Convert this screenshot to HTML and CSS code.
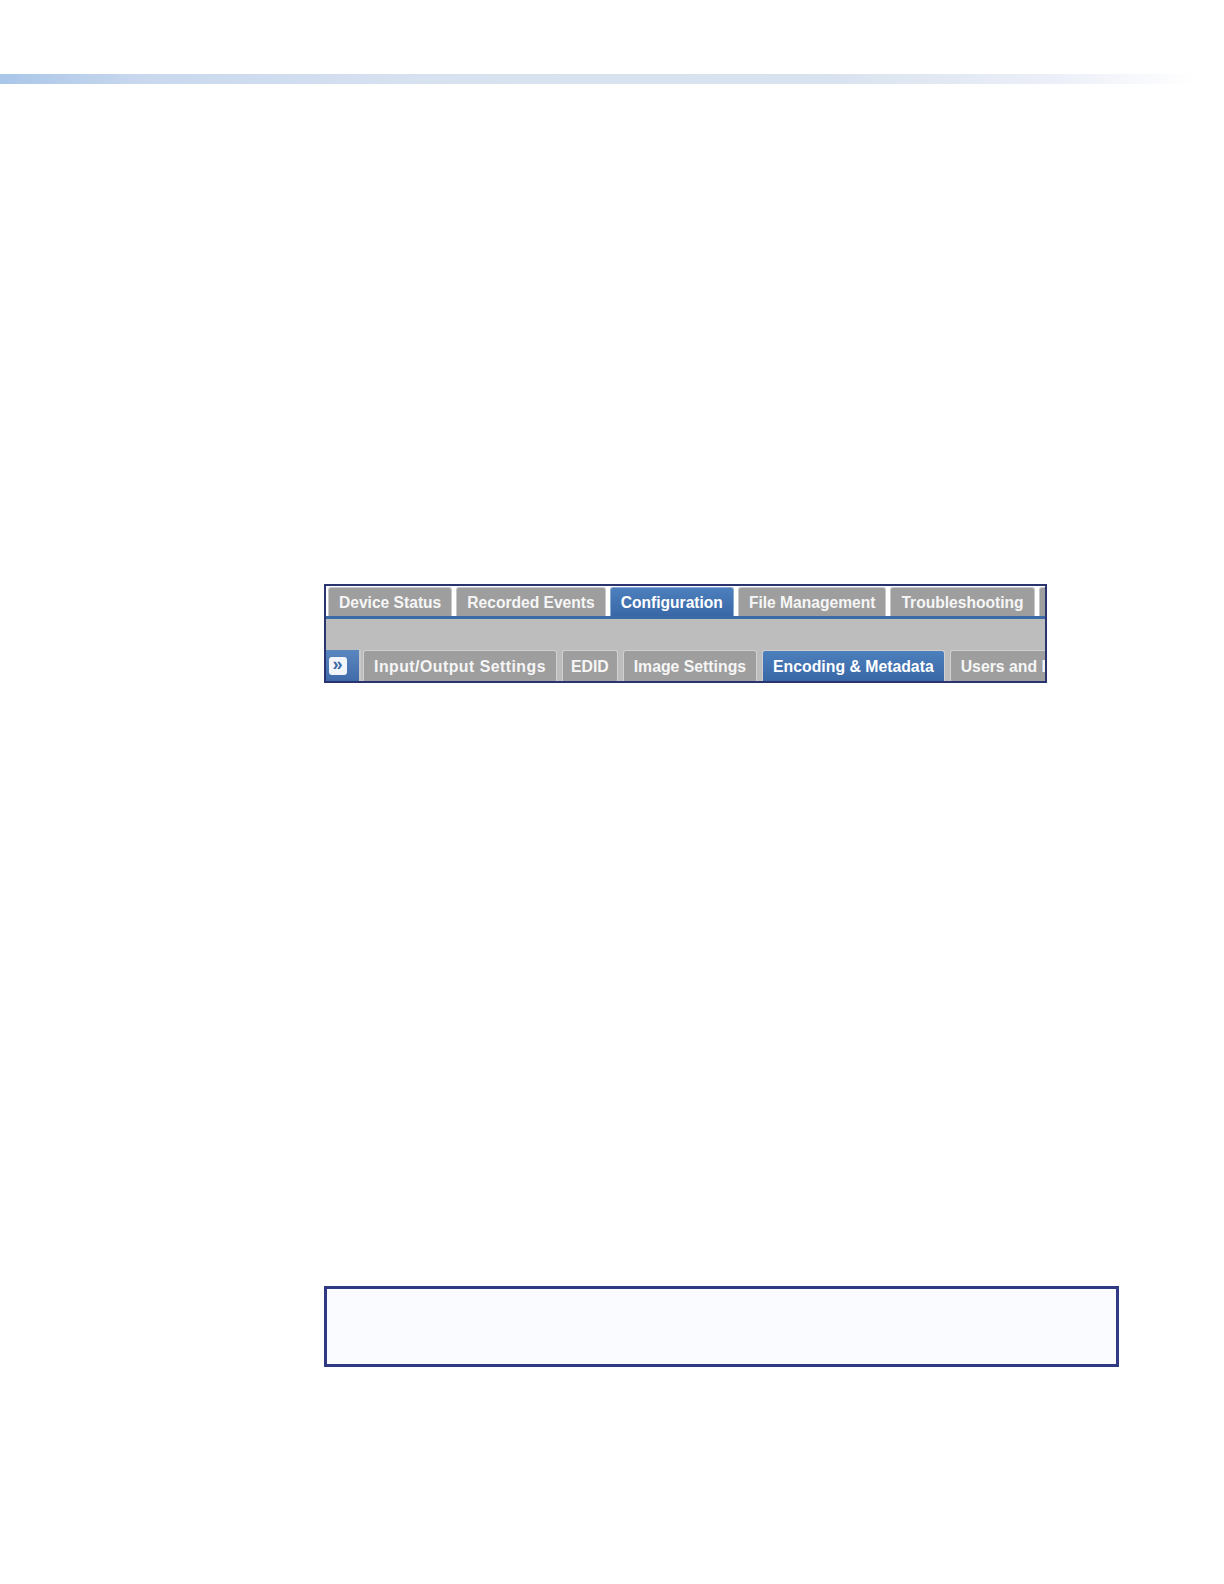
FILE: index.html
```html
<!DOCTYPE html>
<html>
<head>
<meta charset="utf-8">
<link rel="stylesheet" href="styles.css">
</head>
<body>
<div class="topbar"></div>
<div class="shot">
  <div class="row1">
    <div class="tab">Device Status</div>
    <div class="tab">Recorded Events</div>
    <div class="tab active">Configuration</div>
    <div class="tab">File Management</div>
    <div class="tab">Troubleshooting</div>
    <div class="tab stub"></div>
  </div>
  <div class="strip"></div>
  <div class="row2">
    <div class="expander"><span class="exicon">&#187;</span></div>
    <div class="tab t2 wide">Input/Output Settings</div>
    <div class="tab t2 narrow">EDID</div>
    <div class="tab t2">Image Settings</div>
    <div class="tab t2 active">Encoding &amp; Metadata</div>
    <div class="tab t2 cut">Users and Passwords</div>
  </div>
</div>
<div class="note"></div>
</body>
</html>
```
FILE: styles.css
```css
html, body { margin: 0; padding: 0; background: #ffffff; }
body { padding-top: 74px; font-family: "Liberation Sans", Arial, sans-serif; }

.topbar {
  height: 10px;
  width: 1197px;
  background: linear-gradient(to right, #a9c6e8 0%, #c9d8ee 12%, #d7e2f0 35%, #d9e3ef 70%, #eceff8 88%, #ffffff 100%);
}

.shot {
  margin-top: 500px;
  margin-left: 324px;
  width: 719px;
  height: 95px;
  border: 2px solid #2a3570;
  background: #bdbdbd;
  overflow: hidden;
  display: flex;
  flex-direction: column;
}

.row1 {
  display: flex;
  gap: 4px;
  padding: 1px 0 0 2px;
  height: 30px;
  background: #ffffff;
  border-bottom: 3px solid #3c6aa6;
  overflow: hidden;
}

.tab {
  flex: none;
  box-sizing: border-box;
  height: 31px;
  padding: 0 10px;
  background: #9e9e9e;
  border: 1px solid #c8c8c8;
  border-bottom: none;
  border-radius: 3px 3px 0 0;
  color: #f6f6f6;
  font-weight: bold;
  font-size: 15.6px;
  line-height: 30px;
  white-space: nowrap;
}
.tab.active {
  background: linear-gradient(#4d7fbd, #3866a5);
  border-color: #8aaad4;
  color: #ffffff;
}
.tab.stub { width: 14px; padding: 0; }

.strip {
  height: 32px;
  background: #bdbdbd;
}

.row2 {
  display: flex;
  gap: 5px;
  height: 32px;
  background: #bdbdbd;
  overflow: hidden;
}
.row2 .tab { height: 33px; line-height: 31px; border-color: #d0d0d0; font-size: 15.8px; }
.row2 .tab.wide { letter-spacing: 0.5px; }
.row2 .tab.narrow { padding: 0 8px; }
.expander {
  flex: none;
  width: 33px;
  height: 32px;
  margin-right: -3px;
  background: linear-gradient(#5a86c0, #3f6aa8);
  display: flex;
  align-items: center;
  justify-content: center;
  border-right: 2px solid #c8c8c8;
}
.exicon {
  width: 18px;
  height: 18px;
  background: #f2f6fc;
  border-radius: 3px;
  color: #3d68a6;
  font-weight: bold;
  font-size: 18px;
  line-height: 15px;
  text-align: center;
  margin-left: -10px;
}

.note {
  margin-top: 603px;
  margin-left: 324px;
  width: 789px;
  height: 75px;
  border: 3px solid #2f3a82;
  background: #f9fbfe;
}
```
